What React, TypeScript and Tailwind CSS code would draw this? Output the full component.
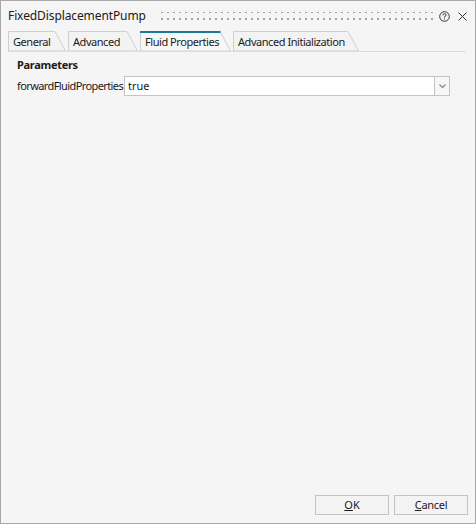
import React from 'react';

const font = { fontFamily: '"Noto Sans", "Open Sans", sans-serif' };

function Tab({ label, active, width, first }: { label: string; active?: boolean; width: number; first?: boolean }) {
  const h = 20;
  const s = 11;
  return (
    <div
      className={`relative h-[20px] shrink-0 ${first ? '' : 'ml-[2px]'} ${active ? 'z-10' : ''}`}
      style={{ width }}
    >
      <svg className="absolute inset-0" width={width} height={h}>
        <polygon
          points={`0.5,${h} 0.5,0.5 ${width - s},0.5 ${width - 0.5},${h}`}
          fill={active ? '#f7f7f7' : '#f3f3f3'}
          stroke="#cfcfcf"
          strokeWidth="1"
        />
        {active && <line x1="0" y1="1" x2={width - s + 0.5} y2="1" stroke="#1b7a9c" strokeWidth="2" />}
      </svg>
      <span className="relative block pl-[5px] pt-[3px] text-[11px] tracking-[-0.45px] leading-[16px] text-[#1a1a1a] whitespace-nowrap">
        {label}
      </span>
    </div>
  );
}

export default function App() {
  return (
    <div className="w-[476px] h-[524px] border border-[#a8a8a8] bg-[#f5f5f5] flex flex-col" style={font}>
      {/* Title bar */}
      <div className="h-[30px] flex items-center pl-[7px] pr-[8px] shrink-0">
        <span className="text-[12px] tracking-[-0.1px] text-[#1a1a1a] leading-none">FixedDisplacementPump</span>
        <svg className="ml-[15px] flex-1" height="10" width="100%">
          <defs>
            <pattern id="grip" width="6" height="7" patternUnits="userSpaceOnUse">
              <rect x="0" y="0" width="2" height="2" fill="#a4a4a4" />
            </pattern>
          </defs>
          <rect x="0" y="1" width="100%" height="9" fill="url(#grip)" />
        </svg>
        <svg className="ml-[6px]" width="11" height="11" viewBox="0 0 11 11">
          <circle cx="5.5" cy="5.5" r="4.8" fill="none" stroke="#333" strokeWidth="1" />
          <path d="M3.9 4.3 Q3.9 2.8 5.5 2.8 Q7.1 2.8 7.1 4.2 Q7.1 5.1 5.5 5.7 L5.5 6.6" fill="none" stroke="#333" strokeWidth="1" />
          <rect x="5" y="7.5" width="1" height="1" fill="#333" />
        </svg>
        <svg className="ml-[8px]" width="9" height="9" viewBox="0 0 9 9">
          <path d="M0.5 0.5 L8.5 8.5 M8.5 0.5 L0.5 8.5" stroke="#333" strokeWidth="1" />
        </svg>
      </div>

      {/* Tabs */}
      <div className="flex items-end pl-[7px] pr-[9px] shrink-0">
        <div className="flex flex-1 border-b border-[#dcdcdc]">
          <Tab label="General" width={58} first />
          <Tab label="Advanced" width={70} />
          <Tab label="Fluid Properties" width={91} active />
          <Tab label="Advanced Initialization" width={126} />
        </div>
      </div>

      {/* Content */}
      <div className="flex-1 flex flex-col pl-[16px] pr-[25px] pt-[5px]">
        <div className="text-[11px] tracking-[-0.3px] font-bold text-[#1a1a1a] leading-[16px]">Parameters</div>
        <div className="flex items-center mt-[3px]">
          <span className="w-[107px] text-[11px] tracking-[-0.6px] text-[#1a1a1a] whitespace-nowrap">forwardFluidProperties</span>
          <div className="flex-1 h-[20px] flex border border-[#c4c4c4] bg-white">
            <span className="flex-1 pl-[3px] text-[11px] leading-[18px] text-[#1a1a1a]">true</span>
            <div className="w-[15px] border-l border-[#c4c4c4] bg-[#f7f7f7] flex items-center justify-center">
              <svg width="7" height="5" viewBox="0 0 7 5">
                <path d="M0.5 0.5 L3.5 3.5 L6.5 0.5" fill="none" stroke="#8a8a8a" strokeWidth="1.3" />
              </svg>
            </div>
          </div>
        </div>
      </div>

      {/* Buttons */}
      <div className="flex justify-end gap-[5px] pr-[7px] pb-[8px] shrink-0">
        <button className="w-[74px] h-[20px] border border-[#c4c4c4] bg-[#f3f3f3] text-[11px] leading-[18px] text-[#1a1a1a]">
          <span className="underline">O</span>K
        </button>
        <button className="w-[74px] h-[20px] border border-[#c4c4c4] bg-[#f3f3f3] text-[11px] tracking-[-0.3px] leading-[18px] text-[#1a1a1a]">
          <span className="underline">C</span>ancel
        </button>
      </div>
    </div>
  );
}
